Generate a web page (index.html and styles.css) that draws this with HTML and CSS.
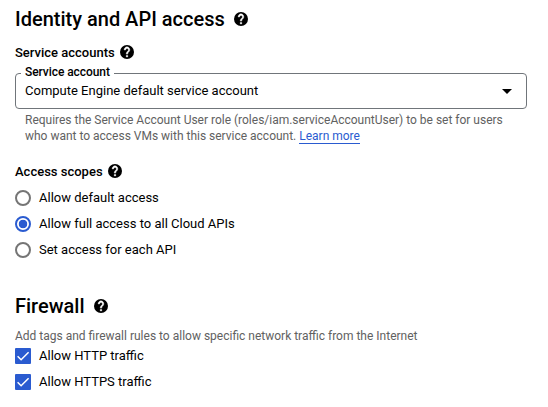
FILE: index.html
```html
<!DOCTYPE html>
<html lang="en">
<head>
<meta charset="utf-8">
<title>Identity and API access</title>
<link rel="stylesheet" href="styles.css">
</head>
<body>
<svg class="defs" width="0" height="0">
  <symbol id="help" viewBox="2 2 20 20"><path stroke="none" d="M12 2a10 10 0 1 0 0 20 10 10 0 0 0 0-20z"/><path fill="#fff" stroke="#fff" stroke-width=".7" d="M13 19h-2v-2h2zm2.07-7.75-.9.92C13.45 12.9 13 13.5 13 15h-2v-.5c0-1.1.45-2.1 1.17-2.83l1.24-1.26A2 2 0 1 0 10 9H8a4 4 0 1 1 7.07 2.25z"/></symbol>
  <symbol id="check" viewBox="0 0 16 16"><path d="M2.6 8.3l3.5 3.5 7.5-7.6"/></symbol>
</svg>
<main>
  <h1>Identity and API access <svg class="help"><use href="#help"/></svg></h1>
  <h2 class="accounts"><span>Service accounts</span> <svg class="help"><use href="#help"/></svg></h2>
  <div class="select"><span class="label">Service account</span><span>Compute Engine default service account</span><i class="arrow"></i></div>
  <p class="hint">Requires the Service Account User role (roles/iam.serviceAccountUser) to be set for users<br>who want to access VMs with this service account. <a>Learn more</a></p>
  <h2 class="scopes"><span>Access scopes</span> <svg class="help"><use href="#help"/></svg></h2>
  <div class="options">
    <div class="option"><i class="radio"></i><span>Allow default access</span></div>
    <div class="option"><i class="radio on"></i><span>Allow full access to all Cloud APIs</span></div>
    <div class="option"><i class="radio"></i><span>Set access for each API</span></div>
  </div>
  <h1 class="firewall">Firewall <svg class="help"><use href="#help"/></svg></h1>
  <p class="desc">Add tags and firewall rules to allow specific network traffic from the Internet</p>
  <div class="options">
    <div class="option"><svg class="box"><use href="#check"/></svg><span>Allow HTTP traffic</span></div>
    <div class="option"><svg class="box"><use href="#check"/></svg><span>Allow HTTPS traffic</span></div>
  </div>
</main>
</body>
</html>
```
FILE: styles.css
```css
* { box-sizing: border-box; }
body { margin: 0; background: #fff; color: #000; font: 13px/16px Roboto, sans-serif; }
.defs { display: none; }
main { padding: 7px 21px 0 15px; }
h1, h2, p { margin: 0; font-weight: 500; }
h1, h2 { display: flex; align-items: center; }
h1 { font-size: 20px; line-height: 24px; height: 24px; gap: 9px; }
h2 { font-size: 13px; height: 16px; gap: 5px; }
h2 span { padding-top: 2px; }
.help { width: 14px; height: 14px; flex: none; }
.accounts { margin-top: 13px; }
.select { position: relative; display: flex; align-items: center; justify-content: space-between; height: 36px; margin-top: 13px; padding: 0 14px 0 9px; border: 1px solid #70757a; border-radius: 4px; }
.label { position: absolute; left: 5px; top: -10px; padding: 0 4px; background: #fff; font-size: 12px; font-weight: 500; letter-spacing: -0.07px; }
.arrow { border: 5px solid transparent; border-top-color: #000; border-bottom: 0; }
.hint { margin: 3px 0 0 10px; font-size: 12px; font-weight: 400; letter-spacing: -0.008px; color: #616161; white-space: nowrap; }
.hint a { color: #2a5bd0; border-bottom: 1px solid #2a5bd0; }
.scopes { margin-top: 19px; }
.options { display: flex; flex-direction: column; gap: 10px; margin-top: 11px; }
.option { display: flex; align-items: center; gap: 8px; height: 16px; }
.radio { width: 16px; height: 16px; border: 2px solid #757575; border-radius: 50%; }
.radio.on { border-color: #2a5bd0; background: radial-gradient(circle, #2a5bd0 4px, #fff 4.6px); }
.firewall { margin-top: 36px; }
.desc { margin-top: 10px; font-size: 12px; font-weight: 400; color: #616161; }
.desc + .options { margin-top: 4px; }
.box { width: 16px; height: 16px; background: #2a5bd0; border-radius: 1px; fill: none; stroke: #fff; stroke-width: 1.5; }
```
